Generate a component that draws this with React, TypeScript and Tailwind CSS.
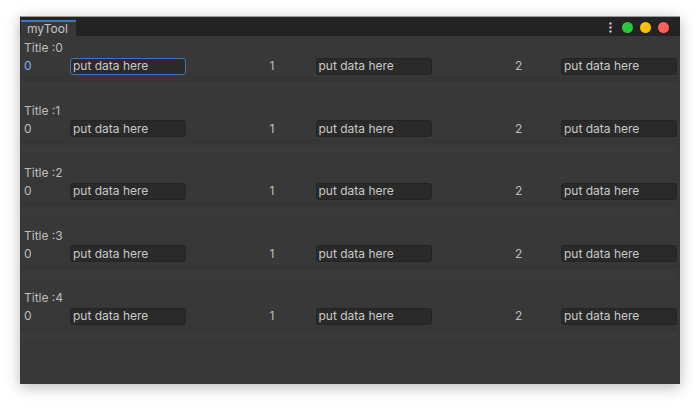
import React from 'react'

const font = { fontFamily: 'Inter, "Noto Sans", sans-serif' }

function Field({ focused }: { focused?: boolean }) {
  return (
    <div
      className={
        'w-[116px] h-[17px] shrink-0 rounded-[3px] bg-[#2a2a2a] border flex items-center pl-[2px] text-[12px] text-[#c8c8c8] leading-none ' +
        (focused ? 'border-[#3a79bb]' : 'border-[#242424]')
      }
    >
      put data here
    </div>
  )
}

function Group({ index }: { index: number }) {
  const first = index === 0
  return (
    <div className="h-[62.6px] flex flex-col shrink-0">
      <div className="h-[19px] pt-[3px] pl-[4px] text-[12px] leading-[16px] text-[#bdbdbd]">Title :{index}</div>
      <div className="h-[20px] flex items-center pl-[3px]">
        {[0, 1, 2].map((c) => (
          <div key={c} className={'flex items-center shrink-0 ' + (c < 2 ? 'w-[245.5px]' : '')}>
            <span
              className={
                'w-[47px] shrink-0 pl-[1px] text-[12px] leading-none ' +
                (first && c === 0 ? 'text-[#7bb2ef]' : 'text-[#bdbdbd]')
              }
            >
              {c}
            </span>
            <Field focused={first && c === 0} />
          </div>
        ))}
      </div>
      <div className="h-[6px] bg-[#363636] mr-[3px]" />
      <div className="h-[8px] bg-[#3a3a3a] mr-[3px]" />
    </div>
  )
}

export default function App() {
  return (
    <div className="w-[700px] h-[408px] bg-white pt-4 pl-5" style={font}>
      <div className="w-[660px] h-[368px] bg-[#383838] border-t border-[#9a9a9a] shadow-[0_3px_14px_rgba(0,0,0,0.28)] flex flex-col">
        <div className="h-[19px] bg-[#232323] flex items-end justify-between">
          <div className="ml-[1px] w-[55px] h-[16px] bg-[#383838] border-t-2 border-[#3a79bb] pl-[6px] text-[12px] leading-[13px] text-[#c4c4c4]">
            myTool
          </div>
          <div className="flex items-center gap-[7px] pr-[11px] self-center pt-[1px]">
            <svg width="3" height="11" viewBox="0 0 3 11" className="mr-[3px]">
              <circle cx="1.5" cy="1.5" r="1.2" fill="#c4c4c4" />
              <circle cx="1.5" cy="5.5" r="1.2" fill="#c4c4c4" />
              <circle cx="1.5" cy="9.5" r="1.2" fill="#c4c4c4" />
            </svg>
            <div className="w-[11px] h-[11px] rounded-full bg-[#27c83f]" />
            <div className="w-[11px] h-[11px] rounded-full bg-[#fdbc06]" />
            <div className="w-[11px] h-[11px] rounded-full bg-[#fe5f57]" />
          </div>
        </div>
        <div className="flex flex-col pt-[1px]">
          {[0, 1, 2, 3, 4].map((i) => (
            <Group key={i} index={i} />
          ))}
        </div>
      </div>
    </div>
  )
}
